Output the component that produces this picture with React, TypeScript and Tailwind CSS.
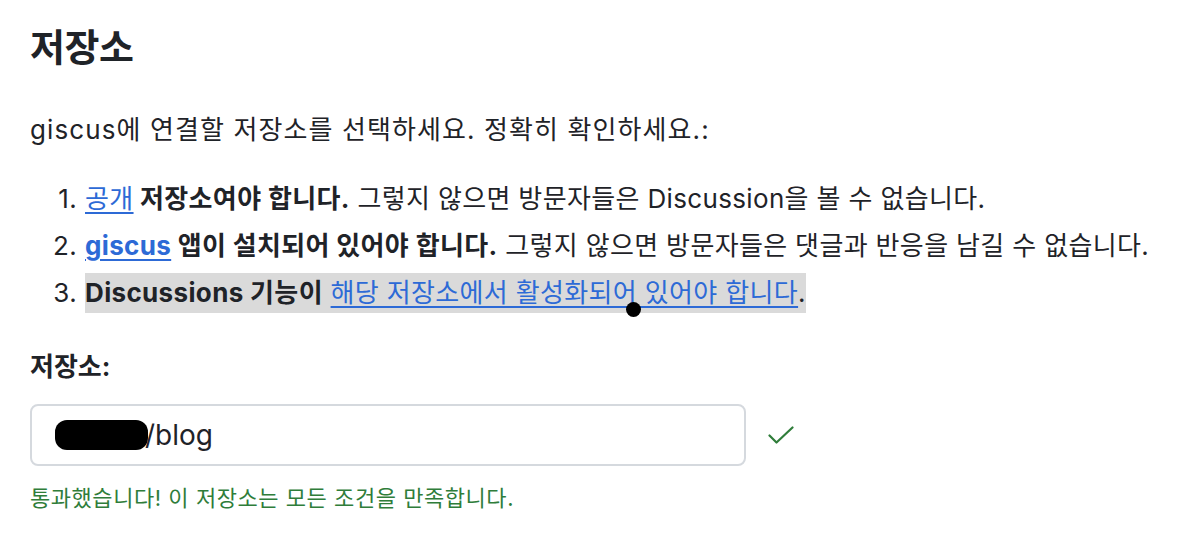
import React from 'react';

const font = { fontFamily: 'Inter, "Noto Sans CJK KR", sans-serif' };

function Check() {
  return (
    <svg width="26" height="19" viewBox="0 0 26 19" fill="none" className="text-[#2f7d3a] shrink-0">
      <path d="M1.5 9.5 L8.5 16.5 L24.5 1.5" stroke="currentColor" strokeWidth="2.2" strokeLinecap="round" strokeLinejoin="round" />
    </svg>
  );
}

export default function App() {
  return (
    <div className="w-[1200px] h-[538px] bg-white text-[#1f2328] overflow-hidden" style={font}>
      <div className="px-[30px] pt-[20px]">
        <h2 className="text-[38px] font-bold leading-[54px] tracking-[-0.5px]">저장소</h2>

        <p className="mt-[38px] text-[26px] leading-[36px] tracking-[1.1px]">
          giscus에 연결할 저장소를 선택하세요. 정확히 확인하세요.:
        </p>

        <ol className="mt-[31px] text-[26px] tracking-[0.35px] whitespace-nowrap">
          <li className="flex leading-[40px]">
            <span className="w-[55px] pr-[8px] text-right">1.</span>
            <span>
              <a className="text-[#2d6ad6] underline underline-offset-[4px]" href="#">공개</a>
              <b> 저장소여야 합니다.</b> 그렇지 않으면 방문자들은 Discussion을 볼 수 없습니다.
            </span>
          </li>
          <li className="flex leading-[40px] mt-[7px]">
            <span className="w-[55px] pr-[8px] text-right">2.</span>
            <span>
              <a className="text-[#2d6ad6] font-bold underline underline-offset-[4px]" href="#">giscus</a>
              <b> 앱이 설치되어 있어야 합니다.</b> 그렇지 않으면 방문자들은 댓글과 반응을 남길 수 없습니다.
            </span>
          </li>
          <li className="flex leading-[40px] mt-[7px]">
            <span className="w-[55px] pr-[8px] text-right">3.</span>
            <span className="relative inline-block bg-[#dadada]">
              <b>Discussions 기능이</b>{' '}
              <a className="text-[#2d6ad6] underline underline-offset-[4px]" href="#">해당 저장소에서 활성화되어 있어야 합니다</a>.
              <span className="absolute left-[541px] top-[29px] w-[15px] h-[15px] rounded-full bg-black" />
            </span>
          </li>
        </ol>

        <label className="block mt-[36px] text-[26px] font-bold leading-[36px]">저장소:</label>

        <div className="mt-[19px] flex items-center gap-[22px]">
          <div className="w-[716px] h-[62px] rounded-[8px] border-2 border-[#d5d9de] flex items-center pl-[23px]">
            <span className="inline-block w-[93px] h-[30px] rounded-[12px] bg-black mr-[-3px]" />
            <span className="text-[28px] leading-[34px]">/blog</span>
          </div>
          <Check />
        </div>

        <p className="mt-[17px] text-[22px] leading-[30px] tracking-[0.55px] text-[#2f7d3a]">
          통과했습니다! 이 저장소는 모든 조건을 만족합니다.
        </p>
      </div>
    </div>
  );
}
